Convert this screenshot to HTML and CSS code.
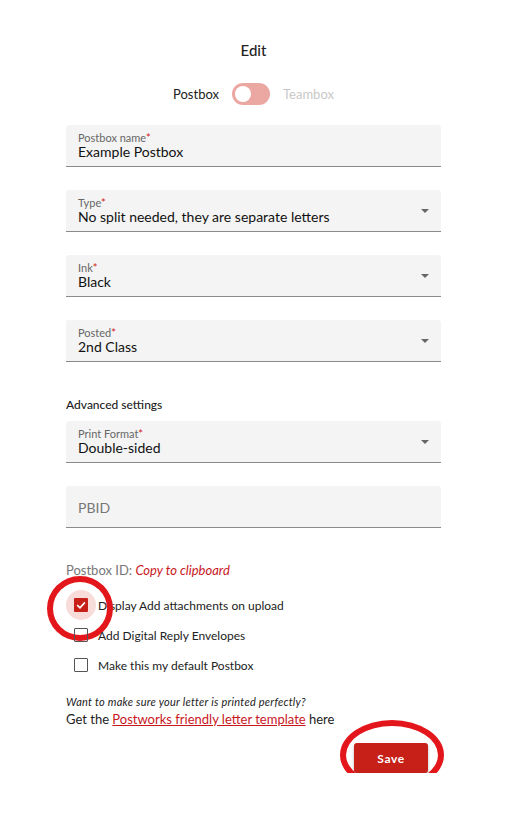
FILE: index.html
```html
<!DOCTYPE html>
<html lang="en">

<head>
  <meta charset="UTF-8">
  <meta name="viewport" content="width=device-width, initial-scale=1.0">
  <title>Edit Postbox</title>
  <link rel="stylesheet" href="styles.css">
</head>

<body>
  <article class="edit">
    <h2 class="edit-title">Edit</h2>

    <div class="switch-row">
      <span class="switch-label">Postbox</span>
      <span class="switch"><span class="switch-thumb"></span></span>
      <span class="switch-label off">Teambox</span>
    </div>

    <div class="field">
      <label class="field-label">Postbox name<span class="req">*</span></label>
      <div class="field-value">Example Postbox</div>
    </div>

    <div class="field select">
      <label class="field-label">Type<span class="req">*</span></label>
      <div class="field-value">No split needed, they are separate letters</div>
      <span class="caret"></span>
    </div>

    <div class="field select">
      <label class="field-label">Ink<span class="req">*</span></label>
      <div class="field-value">Black</div>
      <span class="caret"></span>
    </div>

    <div class="field select">
      <label class="field-label">Posted<span class="req">*</span></label>
      <div class="field-value">2nd Class</div>
      <span class="caret"></span>
    </div>

    <h3 class="section">Advanced settings</h3>

    <div class="field select">
      <label class="field-label">Print Format<span class="req">*</span></label>
      <div class="field-value">Double-sided</div>
      <span class="caret"></span>
    </div>

    <div class="field empty">
      <div class="placeholder">PBID</div>
    </div>

    <p class="postbox-id">Postbox ID: <a class="copy">Copy to clipboard</a></p>

    <ul class="checks">
      <li class="check-item">
        <span class="box checked">
          <svg viewBox="0 0 14 14" width="14" height="14">
            <path d="M3.2 7.2 L6 9.9 L10.9 4.4" fill="none" stroke="#fff" stroke-width="1.6" />
          </svg>
        </span>
        Display Add attachments on upload
        <span class="mark mark-check"></span>
      </li>
      <li class="check-item"><span class="box"></span>Add Digital Reply Envelopes</li>
      <li class="check-item"><span class="box"></span>Make this my default Postbox</li>
    </ul>

    <p class="hint">Want to make sure your letter is printed perfectly?</p>
    <p class="template">Get the <a class="link">Postworks friendly letter template</a> here</p>

    <div class="actions">
      <button class="save" type="button">Save</button>
      <span class="mark mark-save"></span>
    </div>
  </article>
</body>

</html>
```

FILE: styles.css
```css
body {
  margin: 0;
  background: #fff;
  font-family: Lato, "Open Sans", sans-serif;
  color: #222;
}

.edit {
  width: 375px;
  margin-left: 66px;
  padding-top: 41px;
}

.edit-title {
  margin: 0;
  text-align: center;
  font-size: 15px;
  font-weight: 500;
  line-height: 18px;
}

.switch-row {
  display: flex;
  justify-content: center;
  align-items: center;
  gap: 13px;
  margin: 24px 0 20px;
  font-size: 13px;
}

.switch-label.off {
  color: #c8c8c8;
}

.switch {
  display: flex;
  align-items: center;
  width: 38px;
  height: 22px;
  padding: 0 3px;
  box-sizing: border-box;
  border-radius: 11px;
  background: #eba7a2;
}

.switch-thumb {
  width: 16px;
  height: 16px;
  border-radius: 50%;
  background: #fff;
}

.field {
  position: relative;
  height: 42px;
  margin-bottom: 23px;
  padding: 7px 12px 0;
  box-sizing: border-box;
  background: #f4f4f4;
  border-radius: 3px 3px 0 0;
  border-bottom: 1px solid #8a8a8a;
}

.field-label {
  display: block;
  font-size: 11px;
  line-height: 11px;
  color: #666;
}

.req {
  color: #d32020;
}

.field-value {
  font-size: 14px;
  line-height: 18px;
  color: #111;
}

.caret {
  position: absolute;
  right: 12px;
  top: 19px;
  border-left: 4px solid transparent;
  border-right: 4px solid transparent;
  border-top: 4px solid #666;
}

.section {
  margin: 36px 0 9px;
  font-size: 12px;
  font-weight: 500;
  line-height: 14px;
}

.field.empty {
  padding-top: 13px;
  margin-bottom: 34px;
}

.placeholder {
  font-size: 14px;
  color: #777;
}

.postbox-id {
  margin: 0 0 12px;
  font-size: 13px;
  color: #777;
}

.copy {
  color: #c8171d;
  font-style: italic;
}

.checks {
  list-style: none;
  margin: 0;
  padding: 0;
}

.check-item {
  position: relative;
  display: flex;
  align-items: center;
  gap: 10px;
  height: 30px;
  padding-left: 8px;
  font-size: 12px;
}

.box {
  position: relative;
  width: 14px;
  height: 14px;
  box-sizing: border-box;
  border: 1px solid #555;
  border-radius: 1px;
}

.box.checked {
  border: none;
  background: #c62018;
}

.box.checked::before {
  content: "";
  position: absolute;
  left: -8px;
  top: -8px;
  width: 30px;
  height: 30px;
  border-radius: 50%;
  background: #f8dcda;
  z-index: -1;
}

.box svg {
  position: relative;
  display: block;
}

.mark {
  position: absolute;
  border: 6px solid #e3161b;
  border-radius: 50%;
  pointer-events: none;
}

.mark-check {
  left: -19px;
  top: -14px;
  width: 54px;
  height: 53px;
}

.hint {
  margin: 15px 0 3px;
  font-size: 11px;
  font-style: italic;
  letter-spacing: 0.25px;
}

.template {
  margin: 0;
  font-size: 13px;
}

.link {
  color: #c8171d;
  text-decoration: underline;
}

.actions {
  position: relative;
  display: flex;
  justify-content: flex-end;
  padding-right: 13px;
  margin-top: 16px;
}

.save {
  width: 74px;
  height: 30px;
  border: none;
  border-radius: 3px;
  background: #c62018;
  color: #fff;
  font-family: inherit;
  font-size: 12px;
  font-weight: 700;
  letter-spacing: 0.6px;
  box-shadow: 0 2px 3px rgba(0, 0, 0, 0.3);
}

.mark-save {
  left: 274px;
  top: -23px;
  width: 92px;
  height: 58px;
}
```
